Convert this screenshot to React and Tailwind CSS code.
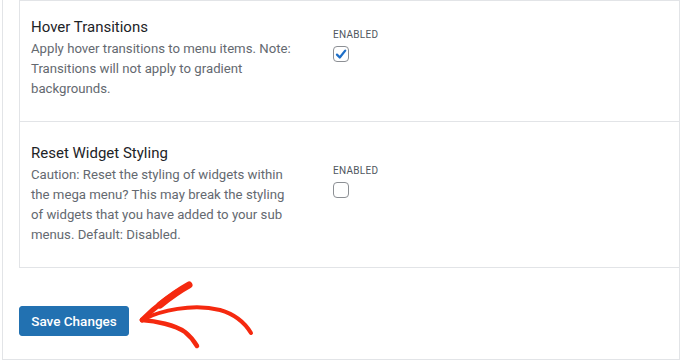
function Row({ title, lines, checked, className, rightPad }) {
  return (
    <div className={"flex border-b border-[#e2e4e7] " + className}>
      <div className="w-[301px] shrink-0 pl-[11px]">
        <div className="text-[15px] leading-[20px] text-[#1d2327]">{title}</div>
        <div className="mt-[2px] text-[13.2px] leading-[20px] text-[#646970]">
          {lines.map((l, i) => (
            <div key={i}>{l}</div>
          ))}
        </div>
      </div>
      <div className={"pl-[12px] " + rightPad}>
        <div className="text-[10px] leading-[12px] tracking-[0.3px] text-[#50575e]">ENABLED</div>
        <div className="mt-[5px] flex h-[16px] w-[16px] items-center justify-center rounded-[4px] border border-[#8c8f94] bg-white">
          {checked && (
            <svg viewBox="0 0 16 16" className="h-[15px] w-[15px]">
              <path d="M3.4 8.2 L6.6 11.4 L12.8 3.6" fill="none" stroke="#1e6fc8" strokeWidth="2.6" strokeLinecap="round" strokeLinejoin="round" />
            </svg>
          )}
        </div>
      </div>
    </div>
  )
}

export default function App() {
  return (
    <div className="relative h-[361px] w-[680px] overflow-hidden bg-white font-['Roboto','Liberation_Sans',sans-serif]">
      <div className="ml-[2px] h-[360px] w-[678px] border-x border-b border-[#e2e4e7]">
        <div className="ml-[16px] border-l border-t border-[#e2e4e7]">
          <Row
            className="h-[121px] pt-[16px]"
            rightPad="pt-[12px]"
            title="Hover Transitions"
            checked
            lines={[
              "Apply hover transitions to menu items. Note:",
              "Transitions will not apply to gradient",
              "backgrounds.",
            ]}
          />
          <Row
            className="h-[146px] pt-[21px]"
            rightPad="pt-[22px]"
            title="Reset Widget Styling"
            lines={[
              "Caution: Reset the styling of widgets within",
              "the mega menu? This may break the styling",
              "of widgets that you have added to your sub",
              "menus. Default: Disabled.",
            ]}
          />
        </div>

        <div className="ml-[16px] mt-[38px]">
          <button className="h-[30px] w-[110px] rounded-[3px] border border-[#2271b1] bg-[#2271b1] text-[13.5px] font-medium text-white">
            Save Changes
          </button>
        </div>
      </div>

      {/* hand drawn arrow pointing at the button */}
      <svg className="absolute left-[130px] top-[275px] h-[80px] w-[130px]" viewBox="0 0 130 80" fill="none" stroke="#f5290f" strokeLinecap="round" strokeLinejoin="round">
        <path d="M12 45 C24 33 40 20 59 10" strokeWidth="5" />
        <path d="M30 30 C40 22 50 15 59 10" strokeWidth="7" />
        <path d="M14 44 C30 36 62 28 90 35 C104 39 115 48 121 58" strokeWidth="4" />
        <path d="M12 45 C26 46 45 50 55 57 C60 61 64 66 67 71" strokeWidth="4.5" />
      </svg>
    </div>
  )
}
